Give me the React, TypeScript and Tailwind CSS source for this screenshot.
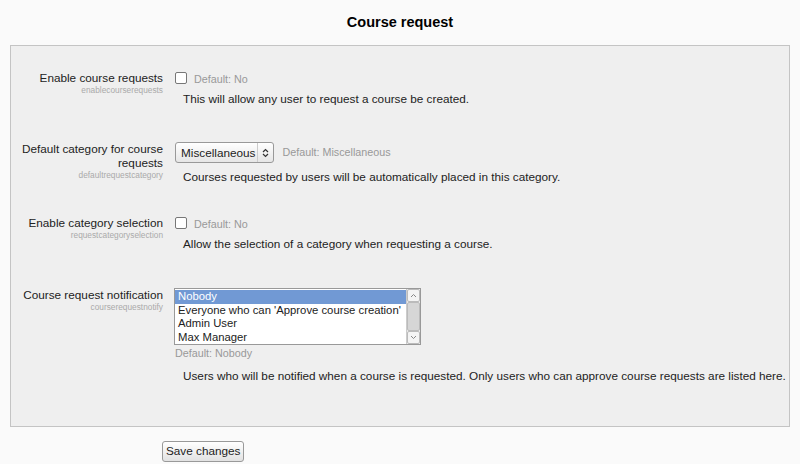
import React from 'react';

const font = { fontFamily: '"Liberation Sans", Arial, sans-serif' };

function Label({ title, name }: { title: React.ReactNode; name: string }) {
  return (
    <div className="w-[152px] shrink-0 text-right">
      <div className="text-[11.75px] leading-[14px] text-[#222]">{title}</div>
      <div className="text-[8.3px] leading-[11px] text-[#aaa]">{name}</div>
    </div>
  );
}

function Checkbox() {
  return <span className="mt-[1px] inline-block h-[12px] w-[12px] shrink-0 rounded-[2px] border border-[#777] bg-white" />;
}

export default function App() {
  return (
    <div className="h-[464px] w-[800px] bg-[#fafafa] text-[#222]" style={font}>
      <h2 className="pt-[13px] pb-[14px] text-center text-[14.5px] font-bold leading-[18px] text-black">Course request</h2>

      <div className="mx-[10px] h-[382px] border border-[#c4c4c4] bg-[#efefef] pt-[25px]">
        {/* enablecourserequests */}
        <div className="flex">
          <Label title="Enable course requests" name="enablecourserequests" />
          <div className="ml-[12px]">
            <div className="flex items-start gap-[7px]">
              <Checkbox />
              <span className="mt-[2px] text-[10.75px] leading-[13px] text-[#999]">Default: No</span>
            </div>
            <p className="mt-[6px] pl-[8px] text-[11.75px] leading-[14px]">This will allow any user to request a course be created.</p>
          </div>
        </div>

        {/* defaultrequestcategory */}
        <div className="mt-[36px] flex">
          <Label title={<>Default category for course<br />requests</>} name="defaultrequestcategory" />
          <div className="ml-[12px]">
            <div className="flex items-center gap-[8px]">
              <div className="flex h-[21px] items-stretch rounded-[3px] border border-[#999] bg-gradient-to-b from-white to-[#e6e6e6] text-[11.75px]">
                <span className="flex items-center pl-[5px] pr-[2px]">Miscellaneous</span>
                <span className="flex w-[16px] items-center justify-center border-l border-[#ccc]">
                  <svg width="7" height="10" viewBox="0 0 7 10" fill="none" stroke="#333" strokeWidth="1.2">
                    <path d="M1 4l2.5-2.5L6 4M1 6l2.5 2.5L6 6" />
                  </svg>
                </span>
              </div>
              <span className="text-[10.75px] leading-[13px] text-[#999]">Default: Miscellaneous</span>
            </div>
            <p className="mt-[7px] pl-[8px] text-[11.75px] leading-[14px]">Courses requested by users will be automatically placed in this category.</p>
          </div>
        </div>

        {/* requestcategoryselection */}
        <div className="mt-[32px] flex">
          <Label title="Enable category selection" name="requestcategoryselection" />
          <div className="ml-[12px]">
            <div className="flex items-start gap-[7px]">
              <Checkbox />
              <span className="mt-[2px] text-[10.75px] leading-[13px] text-[#999]">Default: No</span>
            </div>
            <p className="mt-[6px] pl-[8px] text-[11.75px] leading-[14px]">Allow the selection of a category when requesting a course.</p>
          </div>
        </div>

        {/* courserequestnotify */}
        <div className="mt-[37px] flex">
          <Label title="Course request notification" name="courserequestnotify" />
          <div className="ml-[11px]">
            <div className="flex h-[57px] w-[247px] border border-[#999] bg-white text-[11.3px] leading-[13.5px]">
              <div className="flex-1 overflow-hidden whitespace-nowrap pt-[1px]">
                <div className="bg-[#7199d4] pl-[3px] text-white">Nobody</div>
                <div className="pl-[3px]">Everyone who can 'Approve course creation'</div>
                <div className="pl-[3px]">Admin User</div>
                <div className="pl-[3px]">Max Manager</div>
              </div>
              <div className="flex w-[14px] flex-col border-l border-[#ccc] bg-[#ececec]">
                <div className="flex h-[13px] items-center justify-center rounded-[2px] border border-[#bbb] bg-[#f4f4f4]">
                  <svg width="7" height="5" viewBox="0 0 7 5" fill="none" stroke="#888" strokeWidth="1"><path d="M1 4l2.5-2.5L6 4" /></svg>
                </div>
                <div className="flex-1 rounded-[2px] border border-[#bbb] bg-[#d6d6d6]" />
                <div className="flex h-[13px] items-center justify-center rounded-[2px] border border-[#bbb] bg-[#f4f4f4]">
                  <svg width="7" height="5" viewBox="0 0 7 5" fill="none" stroke="#888" strokeWidth="1"><path d="M1 1l2.5 2.5L6 1" /></svg>
                </div>
              </div>
            </div>
            <div className="mt-[2px] pl-[1px] text-[10.75px] leading-[13px] text-[#999]">Default: Nobody</div>
            <p className="mt-[9px] whitespace-nowrap pl-[9px] text-[11.75px] leading-[14px]">Users who will be notified when a course is requested. Only users who can approve course requests are listed here.</p>
          </div>
        </div>
      </div>

      <div className="pl-[162px] pt-[11px]">
        <button className="h-[21px] rounded-[3px] border border-[#999] bg-gradient-to-b from-white to-[#e2e2e2] px-[3px] text-[11.75px] leading-[14px] text-[#222]">Save changes</button>
      </div>
    </div>
  );
}
